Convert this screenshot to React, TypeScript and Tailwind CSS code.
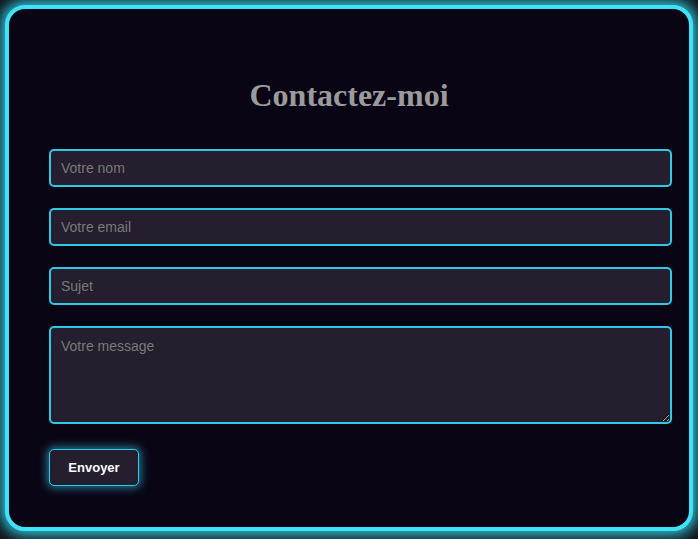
export default function App() {
  const inputCls =
    "block w-[623px] h-[38px] rounded-[5px] border-2 border-[#2cc9e8] bg-[#241e2e] px-[10px] text-[14px] text-[#dddddd] placeholder:text-[#7a7a7a] outline-none";
  return (
    <div className="w-[698px] h-[539px] bg-[#10141c] p-[5px] overflow-hidden" style={{ fontFamily: '"Liberation Sans", Arial, sans-serif' }}>
      <div className="w-[688px] h-[526px] rounded-[20px] border-4 border-[#3fe3f7] bg-[#0a0515] shadow-[0_0_14px_4px_#33c9dc] pt-[68px]">
        <h1
          className="text-center text-[32px] font-bold text-[#9b9b9b] leading-[36px]"
          style={{ fontFamily: '"Liberation Serif", "Times New Roman", serif' }}
        >
          Contactez-moi
        </h1>
        <form className="mt-[36px] pl-[40px] flex flex-col gap-[21px]" onSubmit={(e) => e.preventDefault()}>
          <input className={inputCls} placeholder="Votre nom" />
          <input className={inputCls} placeholder="Votre email" />
          <input className={inputCls} placeholder="Sujet" />
          <textarea
            className="block w-[623px] h-[98px] rounded-[5px] border-2 border-[#2cc9e8] bg-[#241e2e] px-[10px] py-[10px] text-[14px] leading-[16px] text-[#dddddd] placeholder:text-[#7a7a7a] outline-none"
            placeholder="Votre message"
          />
          <div className="mt-[4px]">
            <button
              type="submit"
              className="h-[37px] w-[90px] rounded-[5px] border border-[#2cc9e8] bg-[#241e2e] text-[13px] font-bold text-white shadow-[0_0_8px_2px_rgba(50,200,230,0.6)]"
            >
              Envoyer
            </button>
          </div>
        </form>
      </div>
    </div>
  );
}
